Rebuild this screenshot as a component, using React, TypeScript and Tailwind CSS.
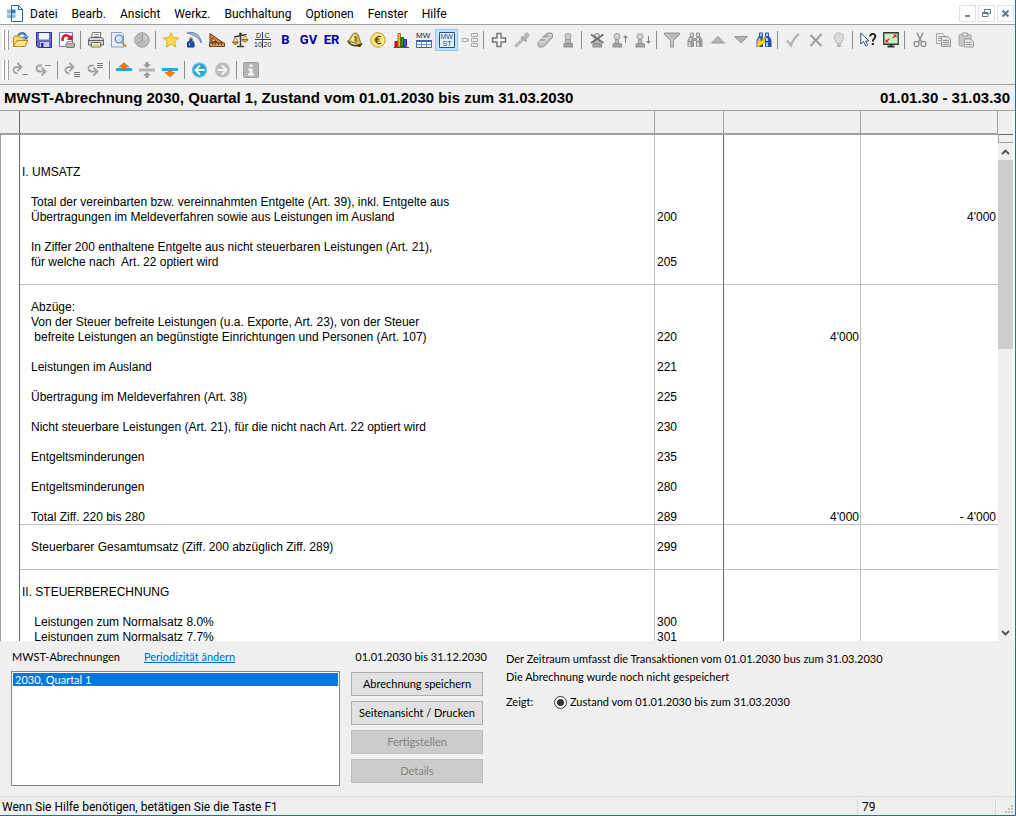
import type { ReactNode } from "react";

function Icon({ children }: { children: ReactNode }) {
  return (
    <svg width="16" height="16" viewBox="0 0 16 16" fill="none" aria-hidden="true" className="overflow-visible">
      {children}
    </svg>
  );
}

const pawn = (
  <>
    <path d="M5.5 7.5 Q6 10 4.5 11.5 H11.5 Q10 10 10.5 7.5Z" fill="#b9b9b9" stroke="#9a9a9a" />
    <circle cx="8" cy="4.5" r="3" fill="#d2d2d2" stroke="#9a9a9a" />
    <rect x="4" y="12" width="8.5" height="3" fill="#a8a8a8" stroke="#8c8c8c" />
  </>
);

const smallPawn = (
  <>
    <path d="M3.5 7.5 Q4 10 2.5 11.5 H7.5 Q6.5 10 6.5 7.5Z" fill="#b9b9b9" stroke="#9a9a9a" />
    <circle cx="5" cy="4.5" r="3" fill="#d2d2d2" stroke="#9a9a9a" />
    <rect x="1" y="12" width="8.5" height="3" fill="#a8a8a8" stroke="#8c8c8c" />
  </>
);

function Binoculars({ light, dark }: { light: string; dark: string }) {
  return (
    <>
      <path d="M3.5 1h3v4h-3z M9.5 1h3v4h-3z" fill={light} stroke={dark} />
      <path d="M2.5 4.5h4l.5 4v6.5h-6.5v-7z M9.5 4.5h4l2 3.5v7H9v-7z" fill={dark} />
      <path d="M3.5 6v3 M2.5 10.5v4 M11 6v3 M11 10.5v4" stroke={light} strokeWidth="2" />
      <path d="M7 6h2v3h-2z" fill={dark} />
    </>
  );
}

const icons: Record<string, ReactNode> = {
  open: (
    <>
      <path d="M.5 14.5V5.5L2 4H6l1.5 1.5H11V14.5Z" fill="#f5d67a" stroke="#b58a25" />
      <path d="M.5 14.5L4 8.5H15L12 14.5Z" fill="#fbe28e" stroke="#b58a25" />
      <path d="M5 3.5C7 .5 11.5 0 13 4.2" stroke="#3f78b8" strokeWidth="2.2" />
      <path d="M10 4.5h6l-3 3.8z" fill="#3f78b8" />
    </>
  ),
  save: (
    <>
      <path d="M.5 .5h15v15H2l-1.5-1.5z" fill="#6468c8" stroke="#2f3590" />
      <path d="M3 1h10v6.5H3z" fill="#f4f6ff" />
      <path d="M4 10h9v5H4z" fill="#c9cde6" />
      <path d="M5 11h2.5v4H5z" fill="#2f3590" />
    </>
  ),
  export: (
    <>
      <path d="M.5 .5h13v14H.5z" fill="#fff" stroke="#6e7fb5" />
      <path d="M3.5 9C3 3 8 1.5 11 5.5" stroke="#d01f2e" strokeWidth="2.6" />
      <path d="M7.5 7.5L13.5 8.5L13.5 2.5z" fill="#d01f2e" />
      <rect x="7" y="11" width="8.5" height="4.5" rx="1" fill="#b5b5b5" stroke="#777" />
      <path d="M8.5 9.5h5v2h-5z" fill="#fff" stroke="#888" />
    </>
  ),
  print: (
    <>
      <path d="M3.5 6L4.5 .5h8.5l-1 5.5z" fill="#fff" stroke="#777" />
      <path d="M6 2.5h5.5 M5.5 4.5h5.5" stroke="#999" />
      <path d="M.5 7L2.5 5.5h11L15.5 7v6H.5z" fill="#d6d6d6" stroke="#666" />
      <path d="M1 8.5h14" stroke="#666" />
      <path d="M3.5 10.5h9v4.5h-9z" fill="#fff" stroke="#666" />
      <path d="M5 12h2.5v2H5z M8.5 12h2.5v2H8.5z" fill="#e5cf22" />
    </>
  ),
  preview: (
    <>
      <path d="M.5 .5h10l2 2v12.5H.5z" fill="#e9effc" stroke="#8a9cd0" />
      <path d="M11 10.5l4 4" stroke="#c9a23d" strokeWidth="2.5" />
      <circle cx="8" cy="7" r="3.8" fill="#cfe4fa" stroke="#6d8bb3" strokeWidth="1.3" />
      <path d="M6 6.5Q6.5 4.8 8.5 5" stroke="#fff" />
    </>
  ),
  clock: (
    <>
      <circle cx="8" cy="8" r="7.3" fill="#bcbcbc" stroke="#a0a0a0" />
      <path d="M8 8V2A6 6 0 0 1 13.5 7.5Z" fill="#c9c9c9" />
      <path d="M8.5 2V8.5L3.5 11.5" stroke="#989898" />
    </>
  ),
  star: (
    <path
      d="M8 .7l2.2 4.9 5.4.5-4 3.6 1.2 5.3L8 12.3 3.2 15l1.2-5.3-4-3.6 5.4-.5z"
      fill="#ffd94a"
      stroke="#e5a823"
    />
  ),
  ink: (
    <>
      <path d="M1 1C8-1 14 2 15.5 11C12 5 8 3 1 1Z" fill="#9db8d4" stroke="#6787aa" />
      <path d="M1.5 10.5L4 8.5V7h2v1.5L8 10.5V15H1.5z" fill="#2450ae" stroke="#173678" />
      <path d="M3.5 5.5h3v2h-3z" fill="#b7632e" />
      <path d="M3.5 11v2.5" stroke="#8fb8f4" />
    </>
  ),
  ruler: (
    <>
      <path d="M1 1.5L14.5 11H1z" fill="#c48643" stroke="#6e3c13" />
      <path d="M3 6l4.5 3.5H3z" fill="#f0f0f0" stroke="#6e3c13" />
      <path d="M.5 11h15v3.5H.5z" fill="#d8a05c" stroke="#6e3c13" />
      <path d="M3.5 11.5v1.5 M6.5 11.5v1.5 M9.5 11.5v1.5 M12.5 11.5v1.5" stroke="#6e3c13" />
    </>
  ),
  scale: (
    <>
      <path d="M8.5 1.5V14 M2 5L14.5 2.5 M5 14.5h7" stroke="#443d35" strokeWidth="1.5" />
      <path d="M3 5L1 10h5z M13 3L10.5 8h5z" stroke="#a88945" />
      <path
        d="M.5 10h6Q5.5 12.5 3.5 12.5Q1.2 12.5 .5 10z M10 7.5h6Q15 10 13 10Q11 10 10 7.5z"
        fill="#d9a536"
        stroke="#6b5120"
        strokeWidth=".7"
      />
      <circle cx="8.5" cy="2" r="1.5" fill="#443d35" />
    </>
  ),
  accounts: (
    <>
      <path d="M0 7.5h16 M7.5 0v16" stroke="#24425f" />
      <g fill="#222" fontFamily="Liberation Sans, sans-serif" fontSize="7">
        <text x="1" y="6">D</text>
        <text x="9.5" y="6">C</text>
        <text x="-1" y="15">10</text>
        <text x="8.5" y="15">20</text>
      </g>
    </>
  ),
  bell: (
    <>
      <path d="M.5 9C4 8 4 1 8.5 1C12.5 1 11.5 8 15 12L11 14.5L9 11.5z" fill="#d5b64b" stroke="#8d7526" />
      <path d="M1 9.5Q4.5 14.5 10.5 13.5L15 12" stroke="#4b3d12" strokeWidth="1.5" />
      <path d="M4 8Q6 2 9 2.5Q5.5 5 7 10" fill="#fff4ab" />
      <path d="M7.5 5h1.5v5" stroke="#5e4a10" />
      <circle cx="12.5" cy="13.5" r="1.5" fill="#3f3313" />
    </>
  ),
  euro: (
    <>
      <circle cx="8" cy="8" r="7.2" fill="#ffe469" stroke="#c79a1a" />
      <circle cx="8" cy="8" r="5.5" stroke="#fff6b8" />
      <path d="M11 5C8.5 3.2 6 5 6 8S8.5 12.8 11 11 M4.5 7.2h5 M4.5 9h5" stroke="#4a3a10" strokeWidth="1.2" />
    </>
  ),
  chart: (
    <>
      <path d="M2 9.5h2.5V15H2z" fill="#f01818" stroke="#941010" />
      <path d="M5 1.5h2.5V15H5z" fill="#ffb62c" stroke="#a4700f" />
      <path d="M8 5.5h2.5V15H8z" fill="#21a321" stroke="#116411" />
      <path d="M11 7.5h2.5V15H11z" fill="#7a4ae0" stroke="#24349a" />
      <path d="M.5 15.5h15.5" stroke="#555" />
    </>
  ),
  mw: (
    <>
      <text x="0" y="6" fill="#222" fontFamily="Liberation Sans, sans-serif" fontSize="8">
        MW
      </text>
      <path d="M.5 8.5h15v7H.5z" fill="#fff" stroke="#3568a8" />
      <path d="M.5 9h15" stroke="#3568a8" strokeWidth="2" />
      <path d="M0 12.5h16 M5.5 9v6 M10.5 9v6" stroke="#5f8fc8" />
    </>
  ),
  mwst: (
    <>
      <path d="M.5 .5h15v15H.5z" fill="#e3effb" stroke="#24508c" />
      <g fill="#24508c" fontFamily="Liberation Sans, sans-serif" fontSize="7">
        <text x="1.5" y="7">MW</text>
        <text x="3.5" y="14">ST</text>
      </g>
    </>
  ),
  tree: <path d="M.5 6.5h5v3h-5z M9.5 1.5h6v3h-6z M9.5 6.5h6v3h-6z M9.5 11.5h6v3h-6z M5.5 8h2" stroke="#a5a5a5" />,
  plus: <path d="M6 1.5h4v4.5h4.5v4H10v4.5H6V10H1.5V6H6z" fill="#f5f5f5" stroke="#777" strokeWidth="1.5" />,
  picker: (
    <>
      <path d="M1.5 14.5L9 7" stroke="#a4a4a4" strokeWidth="2.8" />
      <path d="M2 14L8.5 7.5" stroke="#ddd" />
      <path d="M7.5 4.5l5 5" stroke="#9f9f9f" strokeWidth="2" />
      <path d="M10 7.5L12.5 4" stroke="#b4b4b4" strokeWidth="4" />
      <circle cx="12.8" cy="3.2" r="2.6" fill="#b8b8b8" />
    </>
  ),
  eraser: (
    <>
      <path
        d="M1 10.5L9 2Q10 1 11.5 1H14Q15.5 1 15.5 3V5.5L7.5 14Q6.5 15 5 15H2.5Q.5 15 1 10.5z"
        fill="#c0c0c0"
        stroke="#979797"
      />
      <path d="M2 10h5L14 2.5 M5 6.5h5.5" stroke="#e4e4e4" strokeWidth="1.2" />
      <path d="M3.5 8h5 M7.5 4.5h4" stroke="#979797" />
    </>
  ),
  stamp: pawn,
  stampDelete: (
    <>
      {pawn}
      <path d="M2 2.5L14.5 11 M14.5 2.5L2 11" stroke="#717171" strokeWidth="1.8" />
    </>
  ),
  stampUp: (
    <>
      {smallPawn}
      <path d="M13.5 11V4" stroke="#858585" />
      <path d="M11 6L13.5 3l2.5 3z" fill="#858585" />
    </>
  ),
  stampDown: (
    <>
      {smallPawn}
      <path d="M13.5 4v7" stroke="#858585" />
      <path d="M11 9L13.5 12l2.5-3z" fill="#858585" />
    </>
  ),
  filter: (
    <>
      <path d="M.5 1h15v1.5L9.5 8.5V15H6.5V8.5L.5 2.5z" fill="#b8b8b8" stroke="#989898" />
      <path d="M3 2.5l5 5V14" stroke="#dedede" />
    </>
  ),
  binoculars: <Binoculars light="#d5d5d5" dark="#999999" />,
  up: <path d="M1.5 11L8 4.5l6.5 6.5z" fill="#b4b4b4" stroke="#999" />,
  down: <path d="M1.5 4.5L8 11l6.5-6.5z" fill="#b4b4b4" stroke="#999" />,
  find: (
    <>
      <Binoculars light="#a9c9f5" dark="#2852b0" />
      <path d="M2 7.5l3.5 2L9 4.5l-.5 6L1.5 15z" fill="#ffe01a" stroke="#e8b500" />
    </>
  ),
  check: <path d="M2 8.5l4 5Q8.5 6 14 2" stroke="#b5b5b5" strokeWidth="2.3" />,
  cross: <path d="M2.5 3L13.5 14 M13.5 2L2.5 14" stroke="#9e9e9e" strokeWidth="2" />,
  bulb: (
    <>
      <path d="M8 .8a4.7 4.7 0 0 0-3 8.3L6 11.5h4L11 9.100A4.7 4.7 0 0 0 8 .8z" fill="#ddd" stroke="#b9b9b9" />
      <path d="M6 12.5h4v2.5H6z" fill="#b0b0b0" />
    </>
  ),
  help: (
    <>
      <path d="M.8 1v11l2.7-2.5L5.8 14l1.8-1-2-4h3.5z" fill="#fff" stroke="#2d4f86" />
      <path d="M10.2 4.5C10.2 1 15.3 1 15.3 4.5C15.3 6.5 12.8 6.8 12.8 9.5" stroke="#222" strokeWidth="1.9" />
      <path d="M11.8 11h2v2h-2z" fill="#222" />
    </>
  ),
  screen: (
    <>
      <path d="M.75 .75h14.5v11.5H.75z" fill="#c9f2c9" stroke="#333" strokeWidth="1.3" />
      <path d="M4.5 14.5h7 M8 12v2.5" stroke="#333" strokeWidth="2" />
      <path d="M3.5 9l3-2.2 M9.5 6l3-2.2" stroke="#f01c1c" strokeWidth="1.2" />
      <path d="M2.5 10.5V7l3.5 3.5z M13.5 2.5v3.5L10 2.5z" fill="#f01c1c" />
    </>
  ),
  cut: (
    <>
      <path d="M5 .8L9.5 10 M11 .8L6.5 10" stroke="#949494" strokeWidth="1.6" />
      <circle cx="4.5" cy="12" r="2.5" stroke="#949494" strokeWidth="1.3" />
      <circle cx="11.5" cy="12" r="2.5" stroke="#949494" strokeWidth="1.3" />
    </>
  ),
  copy: (
    <>
      <path d="M1.5 1.5h6l2 2v8h-8z" fill="#e8e8e8" stroke="#a9a9a9" />
      <path d="M3 4.5h4 M3 6.5h4 M3 8.5h4" stroke="#a9a9a9" />
      <path d="M6.5 4.5h6l3 2.5v7.5h-9z" fill="#e0e0e0" stroke="#989898" />
      <path d="M8 8.5h6 M8 10.5h6 M8 12.5h6" stroke="#989898" />
    </>
  ),
  paste: (
    <>
      <rect x="1" y="2.5" width="12" height="11.5" rx="1.5" fill="#c9c9c9" stroke="#a2a2a2" />
      <path d="M4.5 1h5v3h-5z" fill="#e2e2e2" stroke="#a2a2a2" />
      <path d="M6.5 7h6l3 2.5v5.5h-9z" fill="#e6e6e6" stroke="#989898" />
      <path d="M8 10.5h5 M8 12.5h6" stroke="#989898" />
    </>
  ),
  redoLine: (
    <>
      <path d="M8 5H4.5Q.5 5 .5 8T4.500 11.500 M4.500 1l4 4-4 4" stroke="#a3a3a3" strokeWidth="1.8" />
      <path d="M9 12.500h6" stroke="#8d8d8d" />
    </>
  ),
  undoLine: (
    <>
      <path d="M6 3.5H4Q.5 3.5 .5 6.5T4 9.500H9 M5.500 5.500l4 4-4 4" stroke="#a3a3a3" strokeWidth="1.8" />
      <path d="M9 3.5h6" stroke="#8d8d8d" />
    </>
  ),
  redoList: (
    <>
      <path d="M8 5H4.500Q.5 5 .5 8T4.500 11.500 M4.500 1l4 4-4 4" stroke="#a3a3a3" strokeWidth="1.8" />
      <path d="M9 10.5h6 M9 12.5h6 M9 14.5h6" stroke="#777" />
    </>
  ),
  undoList: (
    <>
      <path d="M6 3.5H4Q.5 3.5 .5 6.5T4 9.500H9 M5.500 5.500l4 4-4 4" stroke="#a3a3a3" strokeWidth="1.8" />
      <path d="M9 1.5h6 M9 3.5h6 M9 5.5h6" stroke="#777" />
    </>
  ),
  insertAbove: (
    <>
      <path d="M-1 6h16v3H-1z" fill="#13aef2" />
      <path d="M2 5L7 .5 12 5H9v2H5V5z" fill="#f27a13" stroke="#c95a06" strokeWidth=".5" />
    </>
  ),
  collapse: (
    <>
      <path d="M-1 6.5h16v3H-1z" fill="#b4b4b4" />
      <path d="M5.5 0h3v2.5H11L7 6 3 2.5h2.5z M5.5 16h3v-2.5H11L7 10l-4 3.5h2.5z" fill="#999" />
    </>
  ),
  insertBelow: (
    <>
      <path d="M-1 6h16v3H-1z" fill="#13aef2" />
      <path d="M5 8.5h4v2h3L7 15l-5-4.5h3z" fill="#f27a13" stroke="#c95a06" strokeWidth=".5" />
    </>
  ),
  back: (
    <>
      <circle cx="7.5" cy="8" r="7.5" fill="#2aa5cf" />
      <circle cx="7.5" cy="8" r="6.8" stroke="#70cbe8" />
      <path d="M8 3.5L3.5 8l4.5 4.5 M4 8h8.5" stroke="#fff" strokeWidth="2" />
    </>
  ),
  forward: (
    <>
      <circle cx="7.5" cy="8" r="7.5" fill="#bdbdbd" />
      <path d="M7 3.5L11.5 8 7 12.500 M11 8H2.5" stroke="#f4f4f4" strokeWidth="2" />
    </>
  ),
  info: (
    <>
      <rect x="-.5" y=".5" width="15" height="15" rx="1.5" fill="#b4b4b4" stroke="#a0a0a0" />
      <path d="M5.500 2.500h3v2.500h-3z M4.500 6.500h4v5H10v2H4v-2h1.500v-3h-1z" fill="#f5f5f5" />
    </>
  ),
};

type Tool = { icon?: string; text?: string; label: string; active?: boolean };

const mainTools: Tool[][] = [
  [
    { icon: "open", label: "Öffnen" },
    { icon: "save", label: "Speichern" },
    { icon: "export", label: "Exportieren" },
  ],
  [
    { icon: "print", label: "Drucken" },
    { icon: "preview", label: "Seitenansicht" },
    { icon: "clock", label: "Verlauf" },
  ],
  [
    { icon: "star", label: "Favoriten" },
    { icon: "ink", label: "Journal" },
    { icon: "ruler", label: "Kontenplan" },
    { icon: "scale", label: "Bilanz" },
    { icon: "accounts", label: "Konten" },
    { text: "B", label: "Bilanz drucken" },
    { text: "GV", label: "Gewinnverwendung" },
    { text: "ER", label: "Erfolgsrechnung" },
    { icon: "bell", label: "Erinnerungen" },
    { icon: "euro", label: "Währungen" },
    { icon: "chart", label: "Grafik" },
    { icon: "mw", label: "MWST-Tabelle" },
    { icon: "mwst", label: "MWST-Abrechnung", active: true },
    { icon: "tree", label: "Struktur" },
  ],
  [
    { icon: "plus", label: "Neu" },
    { icon: "picker", label: "Übernehmen" },
    { icon: "eraser", label: "Löschen" },
    { icon: "stamp", label: "Stempel" },
  ],
  [
    { icon: "stampDelete", label: "Stempel entfernen" },
    { icon: "stampUp", label: "Voriger Stempel" },
    { icon: "stampDown", label: "Nächster Stempel" },
  ],
  [
    { icon: "filter", label: "Filter" },
    { icon: "binoculars", label: "Suchen" },
    { icon: "up", label: "Nach oben" },
    { icon: "down", label: "Nach unten" },
    { icon: "find", label: "Schnellsuche" },
  ],
  [
    { icon: "check", label: "Bestätigen" },
    { icon: "cross", label: "Abbrechen" },
    { icon: "bulb", label: "Tipp" },
  ],
  [
    { icon: "help", label: "Direkthilfe" },
    { icon: "screen", label: "Vollbild" },
  ],
  [
    { icon: "cut", label: "Ausschneiden" },
    { icon: "copy", label: "Kopieren" },
    { icon: "paste", label: "Einfügen" },
  ],
];

const rowTools: Tool[][] = [
  [
    { icon: "redoLine", label: "Zeile vor" },
    { icon: "undoLine", label: "Zeile zurück" },
  ],
  [
    { icon: "redoList", label: "Gruppe vor" },
    { icon: "undoList", label: "Gruppe zurück" },
  ],
  [
    { icon: "insertAbove", label: "Oberhalb einfügen" },
    { icon: "collapse", label: "Zusammenführen" },
    { icon: "insertBelow", label: "Unterhalb einfügen" },
  ],
  [
    { icon: "back", label: "Zurück" },
    { icon: "forward", label: "Vorwärts" },
  ],
  [{ icon: "info", label: "Info" }],
];

function Toolbar({ groups, label }: { groups: Tool[][]; label: string }) {
  return (
    <div role="toolbar" aria-label={label} className="flex h-[30px] items-center pl-[2px]">
      <div className="flex h-5 w-[7px] justify-between">
        <span className="w-[3px] border-r border-[#a0a0a0] bg-white" />
        <span className="w-[3px] border-r border-[#a0a0a0] bg-white" />
      </div>
      {groups.map((group, i) => (
        <div key={i} className="flex items-center">
          {i > 0 && <span className="mx-[2px] h-[18px] w-[2px] border-l border-[#8c8c8c]" />}
          {group.map((tool) => (
            <button
              key={tool.label}
              type="button"
              aria-label={tool.label}
              className={
                tool.active
                  ? "flex h-[22px] w-[23px] items-center justify-center border border-[#90c8f6] bg-[#c4e1f9]"
                  : "flex h-[22px] w-[23px] items-center justify-center"
              }
            >
              {tool.icon ? (
                <Icon>{icons[tool.icon]}</Icon>
              ) : (
                <span className="font-[Roboto,sans-serif] text-[13px] font-bold text-[#0000b0]">{tool.text}</span>
              )}
            </button>
          ))}
        </div>
      ))}
    </div>
  );
}

type Row = {
  text?: string;
  section?: boolean;
  code?: string;
  amount?: string;
  total?: string;
  line?: boolean;
};

const rows: Row[] = [
  {},
  {},
  { text: "I. UMSATZ", section: true },
  {},
  { text: "Total der vereinbarten bzw. vereinnahmten Entgelte (Art. 39), inkl. Entgelte aus" },
  { text: "Übertragungen im Meldeverfahren sowie aus Leistungen im Ausland", code: "200", total: "4'000" },
  {},
  { text: "In Ziffer 200 enthaltene Entgelte aus nicht steuerbaren Leistungen (Art. 21)," },
  { text: "für welche nach  Art. 22 optiert wird", code: "205" },
  { line: true },
  {},
  { text: "Abzüge:" },
  { text: "Von der Steuer befreite Leistungen (u.a. Exporte, Art. 23), von der Steuer" },
  { text: " befreite Leistungen an begünstigte Einrichtungen und Personen (Art. 107)", code: "220", amount: "4'000" },
  {},
  { text: "Leistungen im Ausland", code: "221" },
  {},
  { text: "Übertragung im Meldeverfahren (Art. 38)", code: "225" },
  {},
  { text: "Nicht steuerbare Leistungen (Art. 21), für die nicht nach Art. 22 optiert wird", code: "230" },
  {},
  { text: "Entgeltsminderungen", code: "235" },
  {},
  { text: "Entgeltsminderungen", code: "280" },
  {},
  { text: "Total Ziff. 220 bis 280", code: "289", amount: "4'000", total: "- 4'000", line: true },
  {},
  { text: "Steuerbarer Gesamtumsatz (Ziff. 200 abzüglich Ziff. 289)", code: "299" },
  { line: true },
  {},
  { text: "II. STEUERBERECHNUNG", section: true },
  {},
  { text: " Leistungen zum Normalsatz 8.0%", code: "300" },
  { text: " Leistungen zum Normalsatz 7.7%", code: "301" },
];

function ReportTable() {
  return (
    <table className="w-full table-fixed border-separate border-spacing-0 text-[12px] leading-[14px] whitespace-pre">
      <colgroup>
        <col className="w-5" />
        <col />
        <col className="w-[69px]" />
        <col className="w-[137px]" />
        <col className="w-[137px]" />
      </colgroup>
      <thead>
        <tr className="h-6 bg-[#f0f0f0]">
          <th className="border-r border-b-2 border-r-[#696969] border-b-[#a0a0a0]" />
          <th className="border-r border-b-2 border-[#a0a0a0]" />
          <th className="border-r border-b-2 border-[#a0a0a0]" />
          <th className="border-r border-b-2 border-[#a0a0a0]" />
          <th className="border-r border-b-2 border-[#a0a0a0]" />
        </tr>
      </thead>
      <tbody className="align-top">
        {rows.map((row, i) => {
          const line = row.line ? "border-b border-b-[#c0c0c0]" : "";
          return (
            <tr key={i} className="h-[15px]">
              <td className="border-x border-l-[#a0a0a0] border-r-[#696969] p-0" />
              <td className={`border-r border-r-[#c0c0c0] py-0 pr-0 ${row.section ? "pl-[2px]" : "pl-[11px]"} ${line}`}>
                {row.text}
              </td>
              <td className={`border-r border-r-[#696969] py-0 pr-0 pl-[2px] ${line}`}>{row.code}</td>
              <td className={`border-r border-r-[#c0c0c0] py-0 pr-[1px] pl-0 text-right ${line}`}>{row.amount}</td>
              <td className={`py-0 pr-[2px] pl-0 text-right ${line}`}>{row.total}</td>
            </tr>
          );
        })}
      </tbody>
    </table>
  );
}

function Scrollbar() {
  return (
    <div className="flex w-[17px] flex-col pr-[2px]">
      <div className="h-[23px] bg-[#f0f0f0]" />
      <div className="h-[9px] border border-r-0 border-t-[#696969] border-b-[#a0a0a0] border-l-[#a0a0a0] bg-[#f0f0f0]" />
      <div className="flex min-h-0 flex-1 flex-col bg-[#f0f0f0]">
        <button type="button" aria-label="Nach oben blättern" className="flex h-[17px] items-center justify-center">
          <svg width="9" height="6" viewBox="0 0 9 6" fill="none">
            <path d="M1 5l3.5-3.5L8 5" stroke="#505050" strokeWidth="1.8" />
          </svg>
        </button>
        <div className="h-[38%] bg-[#cdcdcd]" />
        <button type="button" aria-label="Nach unten blättern" className="mt-auto flex h-[17px] items-center justify-center">
          <svg width="9" height="6" viewBox="0 0 9 6" fill="none">
            <path d="M1 1l3.5 3.5L8 1" stroke="#505050" strokeWidth="1.8" />
          </svg>
        </button>
      </div>
    </div>
  );
}

const menus = ["Datei", "Bearb.", "Ansicht", "Werkz.", "Buchhaltung", "Optionen", "Fenster", "Hilfe"];

function MenuBar() {
  return (
    <header className="flex h-[25px] items-center border-b border-[#a0a0a0] bg-white pt-[3px] pr-[1px] pl-[7px]">
      <svg width="16" height="17" viewBox="0 0 16 17" fill="none" aria-hidden="true">
        <path d="M4.5 .5h7l4 4V16.5h-11z" fill="#fff" stroke="#1c6a9c" />
        <path d="M11.5 .5v4h4" stroke="#1c6a9c" />
        <path d="M0 4.5h4v4H0z M0 9.5h4v3.5H0z M5 9.5h3.5v3.5H5z" fill="#8db9dd" />
        <path d="M5 4.5h3.5v4H5z" fill="#2c80b8" />
      </svg>
      <nav className="ml-[7px] flex gap-[14px]">
        {menus.map((menu) => (
          <button key={menu} type="button" className="font-[Roboto,sans-serif] text-[12px] leading-4">
            {menu}
          </button>
        ))}
      </nav>
      <div className="ml-auto flex gap-[2px]">
        <button type="button" aria-label="Minimieren" className="flex size-[17px] items-center justify-center border border-[#e2e2e2]">
          <svg width="9" height="9" viewBox="0 0 9 9">
            <path d="M2 6h5v2H2z" fill="#76879a" />
          </svg>
        </button>
        <button type="button" aria-label="Wiederherstellen" className="flex size-[17px] items-center justify-center border border-[#e2e2e2]">
          <svg width="9" height="9" viewBox="0 0 9 9" fill="none" stroke="#66788b">
            <path d="M2.5 3V.5h6v4H6.5" />
            <path d="M.5 3.5h5.5v4H.5z M.5 4.5h5.5" />
          </svg>
        </button>
        <button type="button" aria-label="Schliessen" className="flex size-[17px] items-center justify-center border border-[#e2e2e2]">
          <svg width="9" height="9" viewBox="0 0 9 9">
            <path d="M1.5 1.5l6 6M7.5 1.5l-6 6" stroke="#66788b" strokeWidth="2" />
          </svg>
        </button>
      </div>
    </header>
  );
}

function PanelButton({ children, disabled }: { children: ReactNode; disabled?: boolean }) {
  return (
    <button
      type="button"
      disabled={disabled}
      className="h-6 w-[132px] border border-[#adadad] bg-[#e1e1e1] disabled:border-[#bfbfbf] disabled:bg-[#cccccc] disabled:text-[#838383]"
    >
      {children}
    </button>
  );
}

function ReportPanel() {
  return (
    <section className="flex h-[155px] pt-2 pl-[11px] font-[Lato,sans-serif] text-[11px] leading-4">
      <div className="flex w-[329px] flex-col gap-[6px]">
        <div className="flex gap-6 pl-[1px]">
          <span id="reports-label">MWST-Abrechnungen</span>
          <a href="#periodizitaet" className="text-[#0066cc] underline">
            Periodizität ändern
          </a>
        </div>
        <ul role="listbox" aria-labelledby="reports-label" className="h-[115px] border border-[#828790] bg-white p-[1px]">
          <li role="option" aria-selected="true" className="h-[13px] bg-[#0078d7] pl-[2px] leading-[13px] text-white">
            2030, Quartal 1
          </li>
        </ul>
      </div>
      <div className="ml-[11px] flex w-[136px] flex-col gap-[7px]">
        <span className="text-right">01.01.2030 bis 31.12.2030</span>
        <div className="flex flex-col gap-[5px]">
          <PanelButton>Abrechnung speichern</PanelButton>
          <PanelButton>Seitenansicht / Drucken</PanelButton>
          <PanelButton disabled>Fertigstellen</PanelButton>
          <PanelButton disabled>Details</PanelButton>
        </div>
      </div>
      <div className="ml-[19px] flex flex-1 flex-col gap-[2px] pt-[2px]">
        <p>Der Zeitraum umfasst die Transaktionen vom 01.01.2030 bus zum 31.03.2030</p>
        <p>Die Abrechnung wurde noch nicht gespeichert</p>
        <div role="radiogroup" aria-labelledby="shows-label" className="flex items-center pt-[7px]">
          <span id="shows-label" className="w-12">
            Zeigt:
          </span>
          <label className="flex items-center gap-[3px]">
            <input
              type="radio"
              name="range"
              defaultChecked
              className="size-[13px] appearance-none rounded-full border border-[#333] bg-white p-[2px] before:block before:size-[7px] before:rounded-full checked:before:bg-[#333]"
            />
            Zustand vom 01.01.2030 bis zum 31.03.2030
          </label>
        </div>
      </div>
    </section>
  );
}

function StatusBar() {
  return (
    <footer className="flex h-[19px] items-center border-t border-[#d7d7d7] pt-[2px] font-[Roboto,sans-serif] text-[12px] leading-4">
      <span className="flex-1 pl-[2px]">Wenn Sie Hilfe benötigen, betätigen Sie die Taste F1</span>
      <span className="w-[139px] border-x border-[#d7d7d7] pl-1">79</span>
      <svg width="19" height="16" viewBox="0 0 19 16" className="self-end" aria-hidden="true">
        <path d="M15 6h2v2h-2z M12 9h2v2h-2z M15 9h2v2h-2z M9 12h2v2H9z M12 12h2v2h-2z M15 12h2v2h-2z" fill="#bfbfbf" />
      </svg>
    </footer>
  );
}

export default function App() {
  return (
    <div className="flex h-screen flex-col overflow-hidden border-r border-b border-[#1a6fae] bg-[#f0f0f0] font-[Liberation_Sans,Arial,sans-serif] text-black">
      <MenuBar />
      <div className="h-[60px] border-b border-[#a0a0a0]">
        <Toolbar groups={mainTools} label="Standard" />
        <Toolbar groups={rowTools} label="Zeilen" />
      </div>
      <div className="flex h-[26px] items-center justify-between border-b border-[#a0a0a0] pt-[1px] pr-[5px] pl-1 text-[15px] font-bold">
        <h1>MWST-Abrechnung 2030, Quartal 1, Zustand vom 01.01.2030 bis zum 31.03.2030</h1>
        <span>01.01.30 - 31.03.30</span>
      </div>
      <main className="flex min-h-0 flex-1 bg-white">
        <div className="min-w-0 flex-1 overflow-hidden">
          <ReportTable />
        </div>
        <Scrollbar />
      </main>
      <ReportPanel />
      <StatusBar />
    </div>
  );
}
